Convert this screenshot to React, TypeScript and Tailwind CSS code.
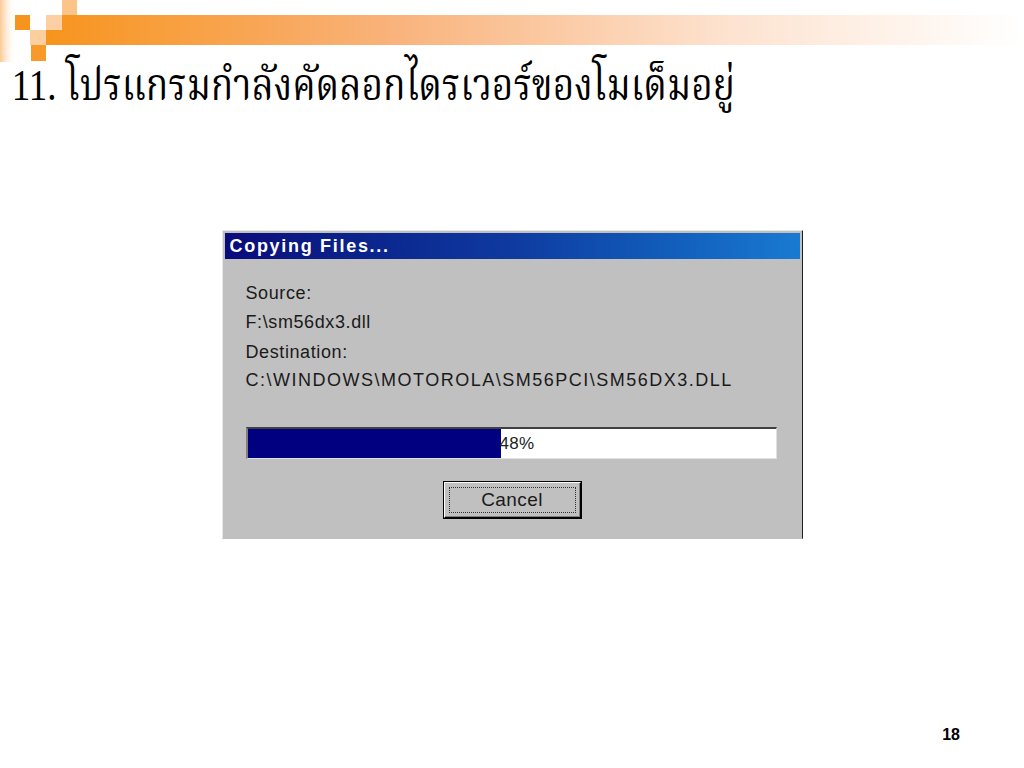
import React from "react";

function HeaderDecor() {
  return (
    <svg width="1024" height="62" viewBox="0 0 1024 62" className="block">
      <defs>
        <linearGradient id="bar" x1="0" x2="1" y1="0" y2="0">
          <stop offset="0" stopColor="#f7941d" />
          <stop offset="0.35" stopColor="#f9b27a" />
          <stop offset="0.7" stopColor="#fde3d0" />
          <stop offset="1" stopColor="#ffffff" />
        </linearGradient>
        <linearGradient id="stripx" x1="0" x2="1" y1="0" y2="0">
          <stop offset="0" stopColor="#fcc890" />
          <stop offset="1" stopColor="#ffffff" stopOpacity="0" />
        </linearGradient>
      </defs>
      <rect x="0" y="0" width="16" height="62" fill="url(#stripx)" />
      <rect x="46" y="15" width="978" height="30" fill="url(#bar)" />
      <rect x="46" y="15" width="16" height="15" fill="#fcd0a4" />
      <rect x="62" y="0" width="15" height="15" fill="#fbc489" />
      <rect x="15" y="15" width="15" height="15" fill="#f7941d" />
      <rect x="30" y="30" width="16" height="15" fill="#fbcf9f" />
      <rect x="31" y="45" width="15" height="16" fill="#f89a2a" />
    </svg>
  );
}

function ProgressDialog() {
  const percent = 48;
  return (
    <div className="mx-auto w-[581px] border border-t-[#e8e8e8] border-l-[#e8e8e8] border-r-[#202020] border-b-[#c0c0c0] bg-[#c0c0c0] p-[2px] font-['Liberation_Sans',sans-serif]">
      <div className="flex h-[26px] items-center bg-gradient-to-r from-[#0a0a7a] via-[#0f3aa0] to-[#1a7ad2] px-[5px]">
        <span className="text-[18px] font-bold tracking-[1.7px] text-white">Copying Files...</span>
      </div>
      <div className="flex flex-col px-[21px] pt-[24px] text-[18px] leading-[20px] tracking-[0.6px] text-[#1a1a1a]">
        <p>Source:</p>
        <p className="mt-[9px]">F:\sm56dx3.dll</p>
        <p className="mt-[10px]">Destination:</p>
        <p className="mt-[8px] tracking-[1.5px]">C:\WINDOWS\MOTOROLA\SM56PCI\SM56DX3.DLL</p>
        <div className="relative mt-[37px] mr-[2px] flex h-[32px] border-t-2 border-l-2 border-t-[#404040] border-l-[#808080] border-r border-b border-r-[#e0e0e0] border-b-[#e0e0e0] bg-white">
          <div className="h-full bg-[#000080]" style={{ width: `${percent}%` }} />
          <span className="absolute left-1/2 top-1/2 -translate-y-1/2 -translate-x-[12px] text-[17px] tracking-[0.3px] text-[#222]">
            {percent}%
          </span>
        </div>
        <div className="flex justify-center pt-[23px] pb-[18px]">
          <button className="flex h-[36px] w-[137px] items-center justify-center border border-t-white border-l-white border-r-black border-b-black bg-[#c0c0c0] shadow-[inset_-1px_-1px_0_#808080,0_0_0_1px_#000]">
            <span className="flex h-[26px] w-[127px] items-center justify-center border border-dotted border-[#333] text-[19px] tracking-[0.4px] text-[#1a1a1a]">
              Cancel
            </span>
          </button>
        </div>
      </div>
    </div>
  );
}

export default function App() {
  return (
    <div className="relative flex h-[768px] w-[1024px] flex-col overflow-hidden bg-white">
      <HeaderDecor />
      <h1 className="-mt-[2px] origin-left scale-x-[0.84] pl-[14px] text-[44px] leading-[52px] whitespace-nowrap text-black font-['Liberation_Serif','Noto_Serif_Thai','Noto_Sans_Thai',serif]">
        11. โปรแกรมกำลังคัดลอกไดรเวอร์ของโมเด็มอยู่
      </h1>
      <div className="mt-[118px]">
        <ProgressDialog />
      </div>
      <div className="mt-auto flex justify-end pr-[64px] pb-[21px]">
        <span className="text-[16px] font-bold text-black font-['Liberation_Sans',sans-serif]">18</span>
      </div>
    </div>
  );
}
